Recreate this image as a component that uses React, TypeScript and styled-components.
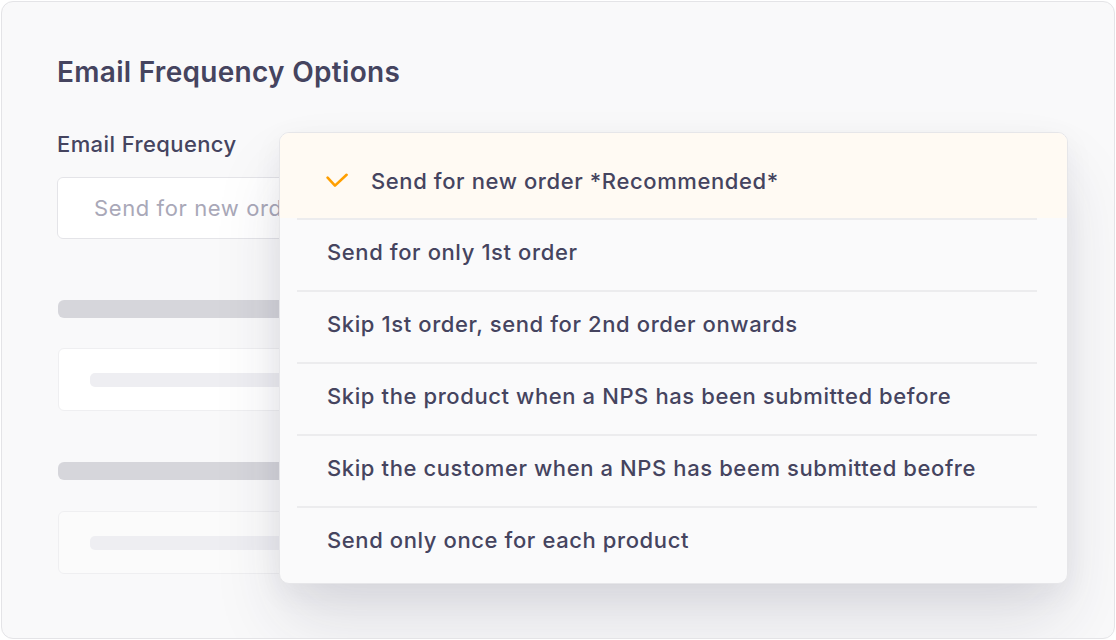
import React, { FC } from "react";
import styled, { createGlobalStyle } from "styled-components";

const GlobalStyle = createGlobalStyle`
  html, body {
    margin: 0;
    padding: 0;
    background: #ffffff;
  }
  body {
    font-family: Inter, "Noto Sans", sans-serif;
    -webkit-font-smoothing: antialiased;
  }
`;

const Page = styled.div`
  width: 1116px;
  height: 640px;
  padding: 1px;
  box-sizing: border-box;
`;

const Card = styled.div`
  position: relative;
  height: 100%;
  box-sizing: border-box;
  border: 1px solid #e4e4e7;
  border-radius: 12px;
  background: #f9f9fa;
  padding: 53px 0 0 55px;
  overflow: hidden;
`;

const Title = styled.h2`
  margin: 0;
  font-size: 28px;
  font-weight: 600;
  letter-spacing: 0.3px;
  color: #45445f;
  line-height: 34px;
`;

const Label = styled.div`
  margin-top: 41px;
  font-size: 22px;
  font-weight: 500;
  letter-spacing: 0.4px;
  color: #45445f;
  line-height: 28px;
`;

const Input = styled.div`
  margin-top: 19px;
  width: 420px;
  height: 62px;
  box-sizing: border-box;
  border: 1px solid #e4e4e8;
  border-radius: 6px;
  background: #ffffff;
  display: flex;
  align-items: center;
  padding-left: 36px;
  font-size: 22px;
  letter-spacing: 0.6px;
  color: #a9a8b8;
  white-space: nowrap;
  overflow: hidden;
`;

const SkeletonBar = styled.div<{ $top: number }>`
  margin-top: ${({ $top }) => $top}px;
  margin-left: 1px;
  width: 420px;
  height: 18px;
  border-radius: 6px;
  background: #d6d6db;
`;

const SkeletonBox = styled.div<{ $top: number; $faded?: boolean }>`
  margin-top: ${({ $top }) => $top}px;
  margin-left: 1px;
  width: 420px;
  height: 63px;
  box-sizing: border-box;
  border: 1px solid #efeff1;
  border-radius: 6px;
  background: ${({ $faded }) => ($faded ? "#fbfbfb" : "#ffffff")};
  display: flex;
  align-items: center;
  padding-left: 31px;
`;

const SkeletonLine = styled.div`
  width: 360px;
  height: 14px;
  border-radius: 5px;
  background: #eeeef2;
`;

const Dropdown = styled.div`
  position: absolute;
  left: 277px;
  top: 130px;
  width: 789px;
  height: 452px;
  box-sizing: border-box;
  border: 1px solid #e6e6e9;
  border-radius: 10px;
  background: #fafafb;
  box-shadow: 0 40px 70px -4px rgba(40, 40, 70, 0.13),
    0 10px 30px rgba(40, 40, 70, 0.06);
  overflow: hidden;
`;

const SelectedRow = styled.div`
  height: 85px;
  box-sizing: border-box;
  padding: 10px 0 0 46px;
  background: #fffaf3;
  display: flex;
  align-items: center;
  gap: 23px;
  font-size: 22px;
  font-weight: 500;
  letter-spacing: 0.6px;
  color: #45445f;
`;

const List = styled.div`
  margin: 0 30px 0 17px;
`;

const Option = styled.div`
  height: 72px;
  box-sizing: border-box;
  border-top: 2px solid #ececee;
  display: flex;
  align-items: center;
  padding: 0 0 6px 30px;
  font-size: 22px;
  font-weight: 500;
  letter-spacing: 0.6px;
  color: #45445f;
`;

const Check: FC = () => (
  <svg width="22" height="15" viewBox="0 0 22 15" fill="none">
    <path
      d="M1.6 4.6 L9 12.6 L20.6 1.8"
      stroke="#ff9f00"
      strokeWidth="2.6"
      strokeLinecap="round"
      strokeLinejoin="round"
    />
  </svg>
);

const options = [
  "Send for only 1st order",
  "Skip 1st order, send for 2nd order onwards",
  "Skip the product when a NPS has been submitted before",
  "Skip the customer when a NPS has beem submitted beofre",
  "Send only once for each product",
];

const App: FC = () => {
  return (
    <>
      <GlobalStyle />
      <Page>
        <Card>
          <Title>Email Frequency Options</Title>
          <Label>Email Frequency</Label>
          <Input>Send for new order</Input>
          <SkeletonBar $top={61} />
          <SkeletonBox $top={30}>
            <SkeletonLine />
          </SkeletonBox>
          <SkeletonBar $top={51} />
          <SkeletonBox $top={31} $faded>
            <SkeletonLine />
          </SkeletonBox>

          <Dropdown>
            <SelectedRow>
              <Check />
              <span>Send for new order *Recommended*</span>
            </SelectedRow>
            <List>
              {options.map((o) => (
                <Option key={o}>{o}</Option>
              ))}
            </List>
          </Dropdown>
        </Card>
      </Page>
    </>
  );
};

export default App;
